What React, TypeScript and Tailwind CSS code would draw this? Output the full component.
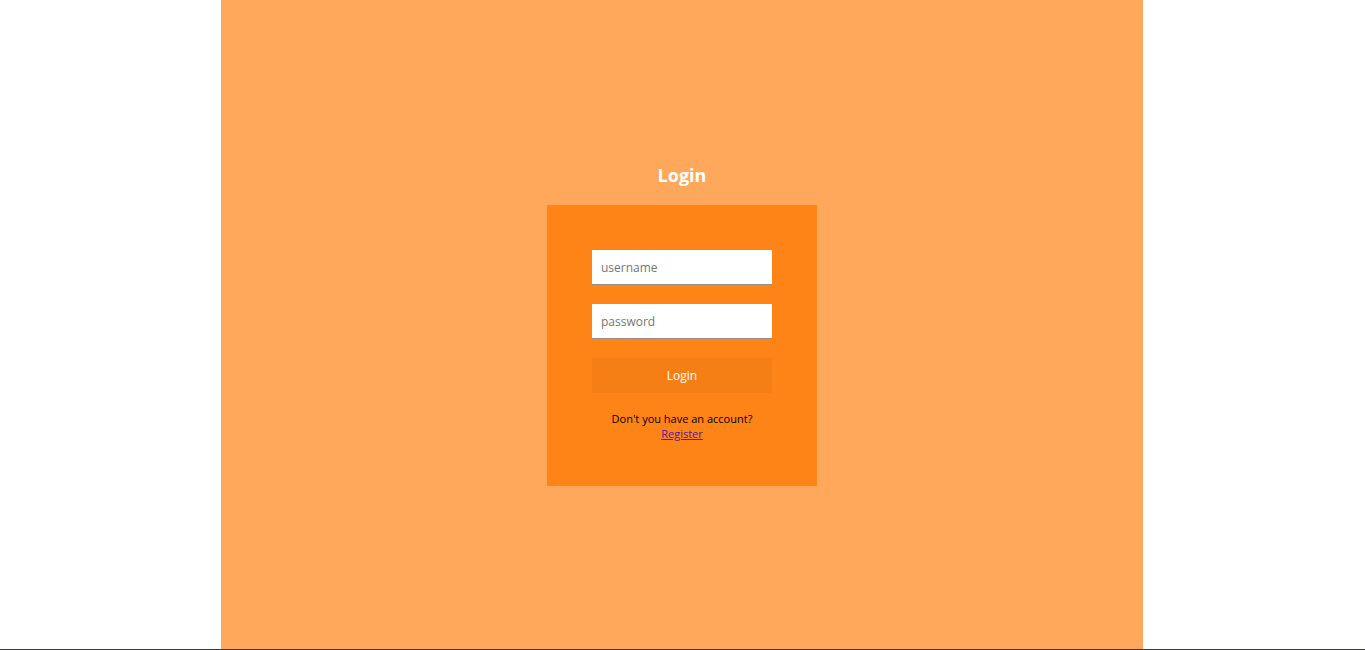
export default function App() {
  return (
    <div className="h-[650px] flex flex-col bg-white" style={{ fontFamily: '"Open Sans", sans-serif' }}>
      <div className="flex h-[649px] pl-[221px]">
        <div className="w-[922px] h-full bg-[#ffa85c] flex flex-col items-center pt-[164px]">
          <h1 className="text-[18px] font-bold text-white leading-[23px]">Login</h1>

          <div className="mt-[18px] w-[270px] h-[281px] bg-[#ff8418] flex flex-col items-center pt-[45px]">
            <input
              className="w-[180px] h-[35px] bg-white border-b border-[#8f8f8f] px-[9px] text-[12px] text-black placeholder:text-[#767676] outline-none"
              placeholder="username"
            />
            <input
              type="password"
              className="mt-[19px] w-[180px] h-[35px] bg-white border-b border-[#8f8f8f] px-[9px] text-[12px] text-black placeholder:text-[#767676] outline-none"
              placeholder="password"
            />
            <button className="mt-[19px] w-[180px] h-[35px] bg-[#f67f15] text-white text-[12px]">
              Login
            </button>
            <div className="mt-[18px] text-[11px] leading-[15px] text-black text-center">
              <p>Don't you have an account?</p>
              <a href="#" className="text-[#551a8b] underline">
                Register
              </a>
            </div>
          </div>
        </div>
      </div>
      <div className="h-px bg-[#3a3a38]" />
    </div>
  );
}
